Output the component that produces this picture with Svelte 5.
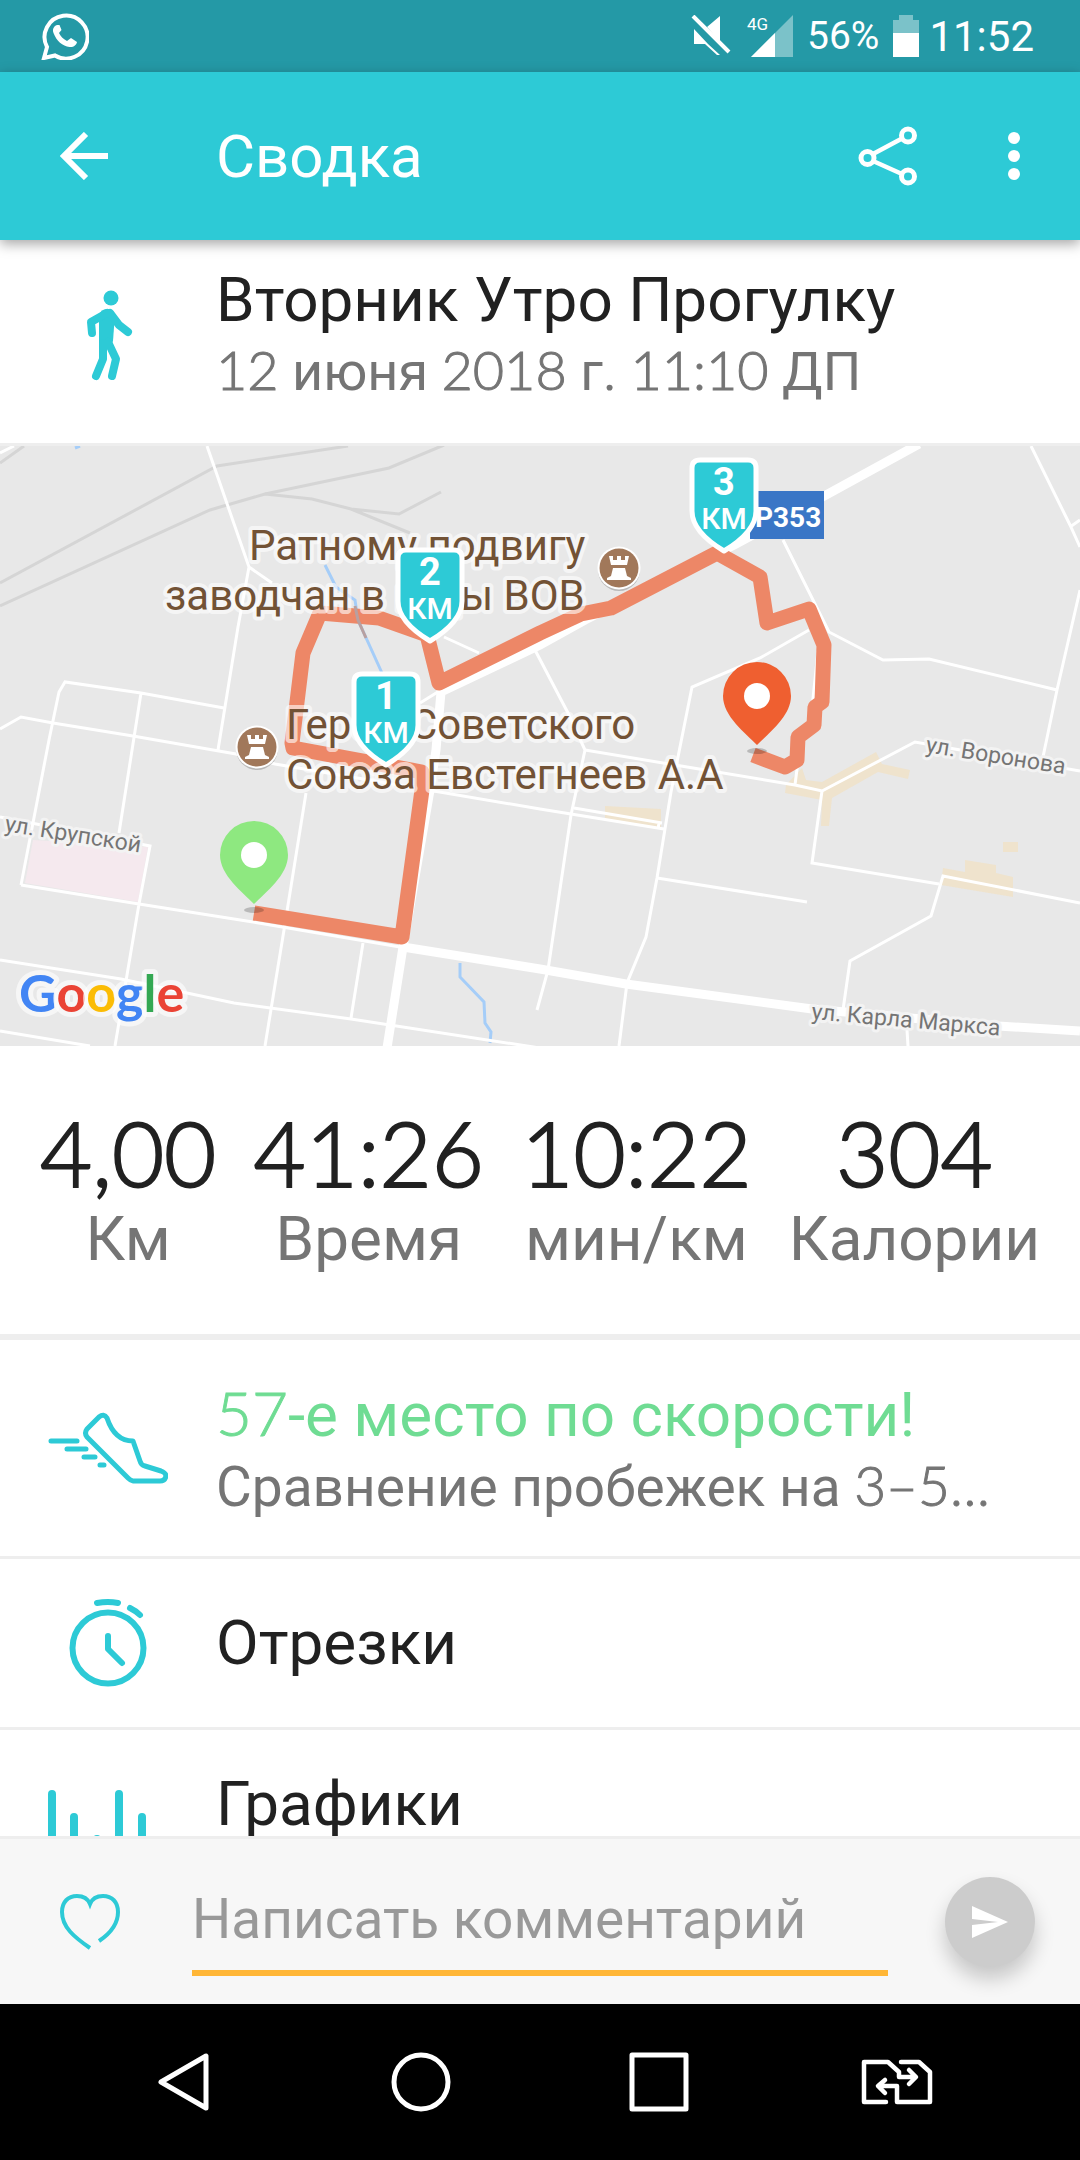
<script>
  let comment = "";

  const stats = [
    { value: "4,00", label: "Км" },
    { value: "41:26", label: "Время" },
    { value: "10:22", label: "мин/км" },
    { value: "304", label: "Калории" },
  ];

  const rows = [
    { icon: "shoe", title: "57-е место по скорости!", sub: "Сравнение пробежек на 3–5…", green: true },
    { icon: "timer", title: "Отрезки" },
    { icon: "chart", title: "Графики", sub: " " },
  ];

  const thinRoads = [
    "M0 7L14 0M207 0L249 121L272 137M249 121L238 181L218 304",
    "M0 283L21 271L53 277L133 290L236 308L275 318L540 363L664 383",
    "M21 439L49 294L59 246L65 236L141 247L224 262M141 247L119 387",
    "M0 371L150 400L139 458L115 600M21 439L139 458L253 476L406 502",
    "M0 514L121 533L234 557L351 573L540 602M0 585L90 600",
    "M306 347L284 484L265 600M363 497L351 572M420 257L441 244M444 191L479 207",
    "M1031 0L1070 79L1080 101M1070 81L1080 74",
    "M783 94L829 186L883 214L929 213L1057 244M1080 144L1057 244L1043 311",
    "M809 184L760 212L692 241L671 346L657 432L646 491L627 537L619 600",
    "M535 204L568 267L585 304L571 369L548 524L537 564M309 200L300 260",
    "M585 304L681 320L795 339L822 345L915 296L1080 325M798 315L795 339",
    "M822 345L812 417L939 438M574 362L662 377M657 432L807 456M659 377L658 383",
    "M1080 457L943 430L931 470L850 515L843 564M907 584L908 600M818 205L812 262",
  ];

  const kmMarks = [
    { n: 2, x: 430, y: 102 },
    { n: 1, x: 386, y: 226 },
    { n: 3, x: 724, y: 12 },
  ];

  const pins = [
    { x: 254, y: 458, color: "#8ee880" },
    { x: 757, y: 299, color: "#ef5f30" },
  ];

  const castles = [
    { x: 257, y: 301 },
    { x: 619, y: 122 },
  ];

  // figures are set in a lighter face than the words around them
  function split(text) {
    return text
      .split(/(\d[\d:,–]*[\d…]|\d)/)
      .filter((part) => part !== "")
      .map((part) => ({ part, num: /\d/.test(part) }));
  }
</script>

<div class="screen">
  <div class="status">
    <svg width="48" height="48" viewBox="0 0 48 48" fill="none">
      <path d="M3 46L6 35A21.500 21.500 0 1 1 14 43.500Z" stroke="#fff" stroke-width="4" />
      <path d="M16 13c-3 1-5 4-3.500 8 3 8 9 13 16 14 4 .5 7-2 7.500-5l-6-4-4 3c-4-2-6.500-5-8-8l2.500-3-2-5z" fill="#fff" />
    </svg>
    <div class="right">
      <svg width="40" height="42" viewBox="0 0 40 42">
        <path d="M3 14L17 29l12 11H26L14 29H3zM16 12L29 1V27z" fill="#fff" />
        <path d="M2 1L38 37" stroke="#fff" stroke-width="4" />
      </svg>
      <div class="signal">
        <span>4G</span>
        <svg width="42" height="42" viewBox="0 0 42 42">
          <path d="M0 42L42 0V42z" fill="#fff" opacity=".4" />
          <path d="M0 42L24 18V42z" fill="#fff" />
        </svg>
      </div>
      <span class="percent">56%</span>
      <svg width="26" height="42" viewBox="0 0 26 42">
        <path d="M6 0H20V5H26V18H0V5H6z" fill="#fff" opacity=".4" />
        <path d="M0 18H26V42H0z" fill="#fff" />
      </svg>
      <span class="clock">11:52</span>
    </div>
  </div>

  <header class="toolbar">
    <button class="back" aria-label="Назад">
      <svg width="48" height="48" viewBox="0 0 48 48" fill="none" stroke="#fff" stroke-width="6">
        <path d="M48 24H6M26 2L4 24L26 46" />
      </svg>
    </button>
    <h1>Сводка</h1>
    <button aria-label="Поделиться">
      <svg width="60" height="60" viewBox="0 0 60 60" fill="none" stroke="#fff" stroke-width="5">
        <circle cx="9.500" cy="32" r="6.500" />
        <circle cx="50" cy="9.500" r="6.500" />
        <circle cx="50" cy="50.500" r="6.500" />
        <path d="M15 28L44 12.500M15 35L44 48" stroke-width="4.500" />
      </svg>
    </button>
    <button class="more" aria-label="Меню">
      <svg width="12" height="48" viewBox="0 0 12 48" fill="#fff">
        <circle cx="6" cy="6" r="6" />
        <circle cx="6" cy="24" r="6" />
        <circle cx="6" cy="42" r="6" />
      </svg>
    </button>
  </header>

  <main>
    <section class="row head">
      <svg class="icon" width="120" height="120" viewBox="0 0 120 120" fill="none" stroke="#2dcad6" stroke-width="8" stroke-linecap="round" stroke-linejoin="round">
        <circle cx="63" cy="23" r="7.500" fill="#2dcad6" stroke="none" />
        <path d="M51 40Q53 34 59 34Q64 34 67 39L65 66L62 73H51z" fill="#2dcad6" stroke="none" />
        <path d="M59 38L43 47L44 58M62 38L71 50L80 57M55 68V84L48 101M60 67L68 84L64 101" />
      </svg>
      <div class="text">
        <h2>Вторник Утро Прогулку</h2>
        <p>{#each split("12 июня 2018 г. 11:10 ДП") as s}<span class:num={s.num}>{s.part}</span>{/each}</p>
      </div>
    </section>

    <svg class="map" viewBox="0 0 1080 600" role="img" aria-label="Карта маршрута">
      <rect width="1080" height="600" fill="#e8e8e8" />
      <path d="M33 394L148 401L138 456L25 437z" fill="#f5e9ee" />
      <g fill="#efe3cd">
        <path d="M605 360L661 363V383L605 374zM1003 396h15v10h-15z" />
        <path d="M965 414L996 419V427L1013 431V451L941 439L943 422L965 426z" />
        <path d="M786 339L802 322L806 334L822 336L876 306L882 318L910 324L908 333L878 326L832 352L829 380H821L822 354L785 347z" />
      </g>
      <g fill="none" stroke="#d5d5d5" stroke-width="3">
        <path d="M0 137L217 20L348 0M0 160L210 64L265 48L389 22L444 -1" />
        <path d="M265 48L312 53L351 63L410 87M351 63L399 68L441 46M0 17L24 0" />
      </g>
      <g fill="none" stroke="#a5cdf8" stroke-width="3">
        <path d="M325 119L336 141L355 154L358 174L382 227M460 517V531L484 556L485 577L491 586L490 597M75 2L80 0" />
      </g>
      <g fill="none" stroke="#fff">
        {#each thinRoads as d}
          <path {d} stroke-width="3" />
        {/each}
        <path d="M919 -2L826 49L736 98L585 174L540 199L441 246L436 304L430 344L403 501L387 602" stroke-width="9" />
        <path d="M403 501L540 523L626 538L812 563L998 580L1080 585" stroke-width="9" />
      </g>

      <path
        class="route"
        d="M254 467L402 491L422 344V326L293 302L292 297L303 207L320 167L379 172L427 189L439 237L540 187L581 168L611 162L717 107L760 131L767 177L809 163L824 199L822 256L815 261L814 279L798 291L797 314L785 321L753 309"
      />
      <path d="M355 160L358 174L366 192" fill="none" stroke="#b8a0a0" stroke-width="3" />

      <g class="place">
        <text x="249" y="114">Ратному подвигу</text>
        <text x="165" y="164">заводчан в годы ВОВ</text>
        <text x="286" y="293">Герой Советского</text>
        <text x="286" y="343">Союза Евстегнеев А.А</text>
      </g>
      <g class="street">
        <text transform="translate(4 385) rotate(9)">ул. Крупской</text>
        <text transform="translate(925 306) rotate(9)">ул. Воронова</text>
        <text transform="translate(811 573) rotate(5)">ул. Карла Маркса</text>
      </g>

      {#each castles as c}
        <g transform="translate({c.x} {c.y})">
          <circle cy="2" r="21" fill="#000" opacity=".2" />
          <circle r="21.500" fill="#fff" />
          <circle r="19.500" fill="#a1785a" />
          <path d="M-10 -12h4v4h4v-4h4v4h4v-4h4l-2 9H-8zM-6 0H6L8 8L12 10V12H-12V10L-8 8z" fill="#fff" />
        </g>
      {/each}

      <rect x="750" y="45" width="74" height="48" fill="#3a76c6" />
      <text class="badge" x="755" y="81">Р353</text>

      {#each pins as p}
        <g transform="translate({p.x} {p.y})">
          <ellipse cy="6" rx="10" ry="3" fill="#000" opacity=".2" />
          <path d="M0 0C-12 -12 -34 -29 -34 -49A34 34 0 0 1 34 -49C34 -29 12 -12 0 0z" fill={p.color} />
          <circle cy="-49" r="13" fill="#fff" />
        </g>
      {/each}

      {#each kmMarks as m}
        <g class="km" transform="translate({m.x} {m.y})">
          <path d="M-32 10Q-32 2 -24 2H24Q32 2 32 10V53C32 70 15 84 0 93C-15 84 -32 70 -32 53z" />
          <text class="n" y="37">{m.n}</text>
          <text class="unit" y="71">КМ</text>
        </g>
      {/each}

      <text class="google" x="19" y="566"
        ><tspan fill="#4285f4">G</tspan><tspan fill="#ea4335">o</tspan><tspan fill="#fbbc05">o</tspan><tspan
          fill="#4285f4">g</tspan
        ><tspan fill="#34a853">l</tspan><tspan fill="#ea4335">e</tspan></text
      >
    </svg>

    <section class="stats">
      {#each stats as s}
        <div class="stat">
          <strong class="num">{s.value}</strong>
          <span>{s.label}</span>
        </div>
      {/each}
    </section>

    {#each rows as r}
      <section class="row" class:double={r.sub}>
        <svg class="icon" width="120" height="120" viewBox="0 0 120 120" fill="none" stroke="#2dcad6" stroke-linecap="round" stroke-linejoin="round">
          {#if r.icon === "shoe"}
            <path
              d="M85 93Q82 92 80 90L39 49Q36 45 39 41L51 29Q56 25 59 30C62 39 68 53 85 53L92 73Q93 77 97 78L113 83Q118 85 118 88Q117 93 112 93z"
              stroke-width="5"
            />
            <path d="M3 53H29M19 61H38M36 69H47M52 77H56" stroke-width="5" />
          {:else if r.icon === "timer"}
            <circle cx="60" cy="65" r="35.500" stroke-width="6" />
            <path d="M60 53V66L74 80M49 20Q60 18 70 20M82 25Q88 28 92 32" stroke-width="6" />
          {:else}
            <path d="M4 16V104M26 39V104M49 61V104M71 16V104M94 39V104" stroke-width="8" />
          {/if}
        </svg>
        <div class="text">
          <h2 class:green={r.green}>{#each split(r.title) as s}<span class:num={s.num}>{s.part}</span>{/each}</h2>
          {#if r.sub}
            <p>{#each split(r.sub) as s}<span class:num={s.num}>{s.part}</span>{/each}</p>
          {/if}
        </div>
      </section>
    {/each}
  </main>

  <form class="comment" on:submit|preventDefault>
    <button type="button" class="like" aria-label="Нравится">
      <svg width="60" height="56" viewBox="0 0 60 56" fill="none" stroke="#2dcad6" stroke-width="4">
        <path d="M30 54C14 43 2 33 2 18C2 8 8 2 17 2C23 2 28 5 30 10C32 5 37 2 43 2C52 2 58 8 58 18C58 30 51 39 39 47" />
      </svg>
    </button>
    <input type="text" aria-label="Комментарий" placeholder="Написать комментарий" bind:value={comment} />
    <button class="send" aria-label="Отправить">
      <svg width="36" height="32" viewBox="0 0 36 32" fill="#fff">
        <path d="M0 0L36 16L0 32V19L26 16L0 13z" />
      </svg>
    </button>
  </form>

  <nav>
    <button aria-label="Назад">
      <svg width="60" height="60" viewBox="0 0 60 60"><path d="M53 4V56L8 30z" /></svg>
    </button>
    <button aria-label="Домой">
      <svg width="60" height="60" viewBox="0 0 60 60"><circle cx="30" cy="30" r="27" /></svg>
    </button>
    <button aria-label="Недавние">
      <svg width="60" height="60" viewBox="0 0 60 60"><rect x="3" y="3" width="54" height="54" /></svg>
    </button>
    <button aria-label="Сменить SIM">
      <svg width="72" height="48" viewBox="0 0 72 48" stroke-linecap="round">
        <path d="M25 44H3V4H27L38 14V19H54M48 12L55 19L48 26M40 4H58L69 14V44H36V28H18M24 22L17 28L24 35" stroke-width="4.500" />
      </svg>
    </button>
  </nav>
</div>

<style>
  :global(body) {
    margin: 0;
    background: #000;
  }
  .screen {
    display: flex;
    flex-direction: column;
    height: 100vh;
    background: #fff;
    color: #212121;
    font-family: Roboto, "Open Sans", sans-serif;
  }
  svg {
    display: block;
    flex: none;
  }
  button {
    padding: 0;
    border: 0;
    background: none;
    cursor: pointer;
  }
  h1,
  h2,
  p {
    margin: 0;
    font-weight: 400;
  }
  .num {
    font-family: Lato, "Open Sans", sans-serif;
    font-weight: 300;
    -webkit-text-stroke: 1px currentColor;
  }
  .status {
    display: flex;
    flex: none;
    align-items: center;
    justify-content: space-between;
    height: 72px;
    padding: 0 46px 0 41px;
    background: #2499a6;
    color: #fff;
  }
  .right {
    display: flex;
    align-items: center;
  }
  .signal {
    position: relative;
    margin: 0 14px 0 20px;
  }
  .signal span {
    position: absolute;
    top: -1px;
    left: -4px;
    font-size: 17px;
    line-height: 20px;
  }
  .percent {
    margin-right: 14px;
    font-size: 39px;
  }
  .clock {
    margin-left: 10px;
    font-size: 42px;
  }
  .toolbar {
    position: relative;
    z-index: 1;
    display: flex;
    flex: none;
    align-items: center;
    height: 168px;
    padding: 0 60px;
    background: #2dcad6;
    color: #fff;
    box-shadow: 0 4px 12px rgba(0, 0, 0, 0.35);
  }
  h1 {
    flex: 1;
    margin-left: 108px;
    font-size: 60px;
  }
  .more {
    margin-left: 90px;
  }
  main {
    flex: 1;
    min-height: 0;
    overflow: hidden;
  }
  .row {
    display: flex;
    align-items: center;
    min-height: 168px;
    padding: 0 48px;
    border-bottom: 3px solid #eee;
  }
  .row.double {
    min-height: 216px;
  }
  .row.head {
    min-height: 189px;
    padding-bottom: 14px;
  }
  .text {
    min-width: 0;
    margin-left: 48px;
  }
  h2 {
    font-size: 62px;
    line-height: 72px;
    white-space: nowrap;
  }
  h2.green {
    color: #6fdc93;
  }
  p {
    min-height: 68px;
    color: #757575;
    font-size: 55px;
    line-height: 68px;
    white-space: nowrap;
  }
  .head p {
    font-size: 54px;
  }
  .map {
    width: 100%;
    height: auto;
  }
  .route {
    fill: none;
    stroke: #ed8767;
    stroke-width: 15;
    stroke-linejoin: round;
  }
  .place {
    fill: #725235;
    font-size: 42px;
    stroke: rgba(255, 255, 255, 0.6);
    stroke-width: 8px;
    stroke-linejoin: round;
    paint-order: stroke;
  }
  .street {
    fill: #757575;
    font-size: 23px;
    stroke: #f3f3f3;
    stroke-width: 6px;
    stroke-linejoin: round;
    paint-order: stroke;
  }
  .badge {
    fill: #fff;
    font-size: 28px;
    font-weight: 700;
  }
  .km path {
    fill: #2dcad6;
    stroke: #fff;
    stroke-width: 5;
    stroke-linejoin: round;
  }
  .km text {
    fill: #fff;
    text-anchor: middle;
  }
  .km .n {
    font-size: 38px;
    font-weight: 700;
  }
  .km .unit {
    font-size: 30px;
    font-weight: 500;
  }
  .google {
    font-family: Lato, sans-serif;
    font-size: 52px;
    font-weight: 700;
    stroke: rgba(255, 255, 255, 0.6);
    stroke-width: 10px;
    stroke-linejoin: round;
    paint-order: stroke;
  }
  .stats {
    display: flex;
    justify-content: space-between;
    padding: 58px 40px 56px;
    border-bottom: 6px solid #eee;
  }
  .stat {
    display: flex;
    flex-direction: column;
    align-items: center;
  }
  .stat strong {
    font-size: 90px;
    line-height: 96px;
    -webkit-text-stroke-width: 2px;
  }
  .stat span {
    color: #757575;
    font-size: 62px;
    line-height: 78px;
  }
  .comment {
    display: flex;
    flex: none;
    align-items: center;
    height: 165px;
    padding: 0 45px 0 60px;
    border-top: 3px solid #eee;
    background: #f7f7f7;
  }
  .comment input {
    box-sizing: border-box;
    flex: 1;
    min-width: 0;
    height: 109px;
    margin: 0 57px 0 72px;
    padding: 0;
    border: 0;
    border-bottom: 6px solid #ffb636;
    border-radius: 0;
    outline: none;
    background: none;
    color: #212121;
    font-family: inherit;
    font-size: 55px;
  }
  .comment input::placeholder {
    color: #999;
    opacity: 1;
  }
  .send {
    display: flex;
    align-items: center;
    justify-content: center;
    width: 90px;
    height: 90px;
    border-radius: 50%;
    background: #ccc;
    box-shadow: 0 12px 20px rgba(0, 0, 0, 0.2);
  }
  nav {
    display: flex;
    flex: none;
    align-items: center;
    justify-content: space-around;
    height: 156px;
    padding: 0 64px;
    background: #000;
  }
  nav button {
    display: flex;
    flex: 1;
    justify-content: center;
  }
  nav svg {
    fill: none;
    stroke: #fff;
    stroke-width: 5;
    stroke-linejoin: round;
  }
</style>
